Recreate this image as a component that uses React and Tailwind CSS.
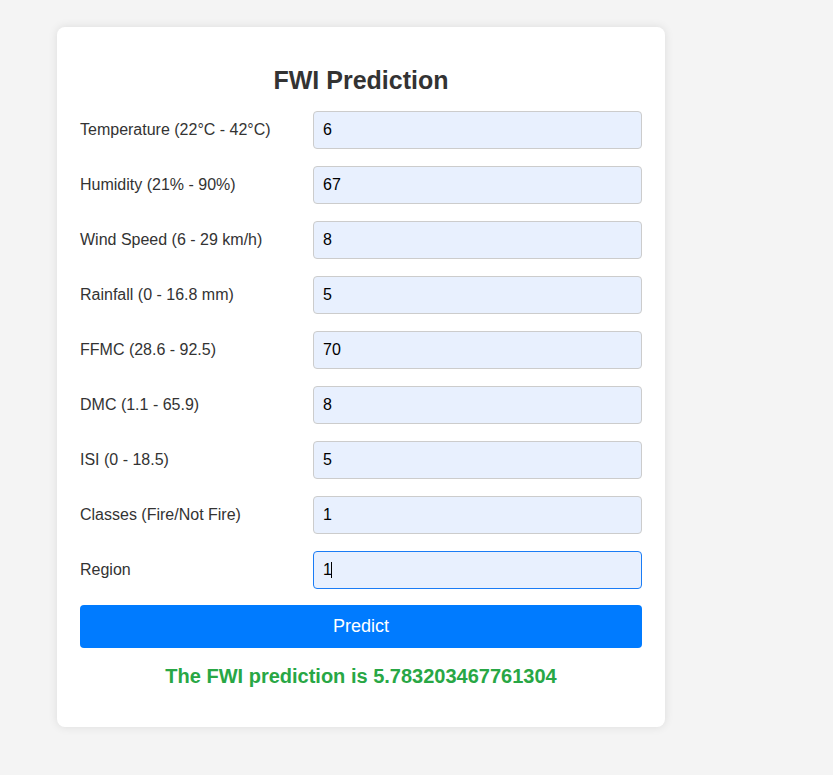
import { useState } from 'react'

const fields = [
  { name: 'Temperature', label: 'Temperature (22°C - 42°C)', value: '6' },
  { name: 'RH', label: 'Humidity (21% - 90%)', value: '67' },
  { name: 'Ws', label: 'Wind Speed (6 - 29 km/h)', value: '8' },
  { name: 'Rain', label: 'Rainfall (0 - 16.8 mm)', value: '5' },
  { name: 'FFMC', label: 'FFMC (28.6 - 92.5)', value: '70' },
  { name: 'DMC', label: 'DMC (1.1 - 65.9)', value: '8' },
  { name: 'ISI', label: 'ISI (0 - 18.5)', value: '5' },
  { name: 'Classes', label: 'Classes (Fire/Not Fire)', value: '1' },
  { name: 'Region', label: 'Region', value: '1', focused: true },
]

function App() {
  const [values, setValues] = useState(() =>
    Object.fromEntries(fields.map(f => [f.name, f.value]))
  )

  return (
    <div
      className="bg-[#f4f4f4] min-h-screen pt-[27px] pl-[57px]"
      style={{ fontFamily: "'Liberation Sans', Arial, sans-serif" }}
    >
      <div className="w-[608px] h-[700px] bg-white rounded-lg shadow-[0_0_10px_rgba(0,0,0,0.1)] px-[23px] pt-[39px]">
        <h2 className="text-center text-[25px] leading-[28px] font-bold text-[#333] m-0">FWI Prediction</h2>

        <form className="mt-[17px]" onSubmit={e => e.preventDefault()}>
          <div className="flex flex-col gap-[17px]">
            {fields.map(f => (
              <div key={f.name} className="flex items-center">
                <label className="w-[233px] text-[16px] text-[#333]">{f.label}</label>
                <div className="relative flex-1">
                  <input
                    type="text"
                    value={values[f.name]}
                    onChange={e => setValues({ ...values, [f.name]: e.target.value })}
                    className={`w-full h-[38px] px-[9px] text-[16px] text-black bg-[#e8f0fe] rounded-[4px] border outline-none ${
                      f.focused ? 'border-[#1a7cf5]' : 'border-[#cccccc]'
                    }`}
                  />
                  {f.focused && (
                    <span className="absolute left-[18px] top-[11px] w-px h-[16px] bg-black" />
                  )}
                </div>
              </div>
            ))}
          </div>

          <button
            type="submit"
            className="mt-[16px] w-full h-[43px] bg-[#007bff] text-white text-[18px] rounded-[4px]"
          >
            Predict
          </button>
        </form>

        <p className="mt-[17px] text-center text-[20px] leading-[23px] font-bold text-[#28a745]">
          The FWI prediction is 5.783203467761304
        </p>
      </div>
    </div>
  )
}

export default App
